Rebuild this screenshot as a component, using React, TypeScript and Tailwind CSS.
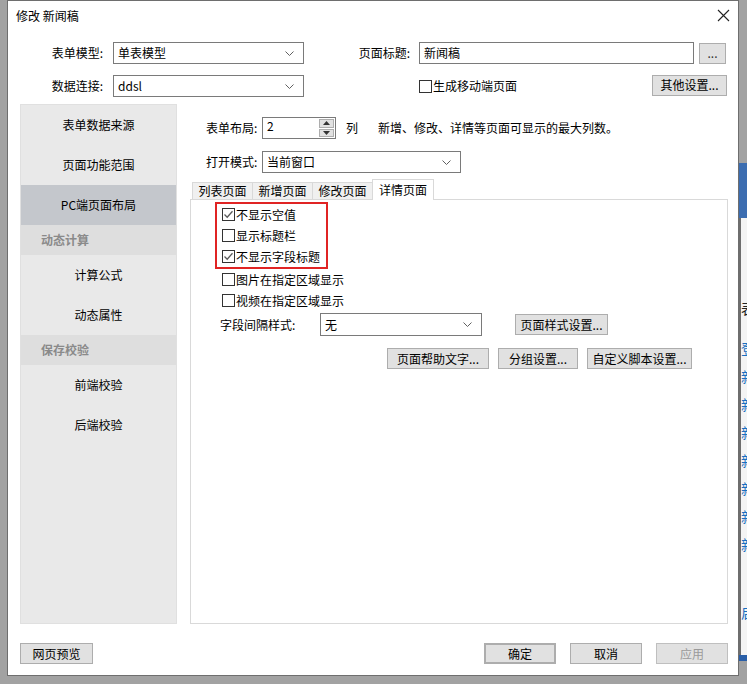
import React from 'react';

const Chevron = () => (
  <svg width="9" height="5" viewBox="0 0 9 5" className="shrink-0">
    <path d="M0.5 0.5 L4.5 4.5 L8.5 0.5" fill="none" stroke="#606060" strokeWidth="1" />
  </svg>
);

const Select: React.FC<{ value: string; className?: string }> = ({ value, className = '' }) => (
  <div className={`h-[22px] border border-[#7a7a7a] bg-white flex items-center pl-[4px] pr-[9px] ${className}`}>
    <span className="flex-1 leading-[20px]">{value}</span>
    <Chevron />
  </div>
);

const Btn: React.FC<{ children: React.ReactNode; className?: string }> = ({ children, className = '' }) => (
  <div className={`h-[21px] border border-[#adadad] bg-[#e1e1e1] flex items-center justify-center leading-none ${className}`}>
    {children}
  </div>
);

const Box: React.FC<{ checked?: boolean }> = ({ checked }) => (
  <span className="w-[13px] h-[13px] border border-[#333333] bg-white flex items-center justify-center shrink-0">
    {checked && (
      <svg width="11" height="11" viewBox="0 0 11 11">
        <path d="M1.5 5.5 L4.2 8.2 L9.5 2.2" fill="none" stroke="#5a5a5a" strokeWidth="1.3" />
      </svg>
    )}
  </span>
);

const Check: React.FC<{ checked?: boolean; label: string; className?: string }> = ({ checked, label, className = '' }) => (
  <div className={`h-[21px] flex items-center gap-[1px] ${className}`}>
    <Box checked={checked} />
    <span>{label}</span>
  </div>
);

const SideItem: React.FC<{ label: string; active?: boolean }> = ({ label, active }) => (
  <div className={`h-[40px] flex items-center justify-center ${active ? 'bg-[#c4c7cc]' : ''}`}>{label}</div>
);

const SideHeader: React.FC<{ label: string }> = ({ label }) => (
  <div className="h-[30px] flex items-center pl-[20px] bg-[#dedede] font-bold text-[#8a8a8a]">{label}</div>
);

const Spin = () => (
  <div className="w-[74px] h-[22px] border border-[#7a7a7a] bg-white flex">
    <span className="flex-1 pl-[4px] leading-[16px]">2</span>
    <div className="w-[16px] flex flex-col gap-[1px] py-[1px] pr-[1px]">
      <div className="flex-1 bg-[#e1e1e1] border border-[#adadad] flex items-center justify-center">
        <svg width="7" height="4" viewBox="0 0 7 4"><path d="M0 4 L3.5 0 L7 4 Z" fill="#333" /></svg>
      </div>
      <div className="flex-1 bg-[#e1e1e1] border border-[#adadad] flex items-center justify-center">
        <svg width="7" height="4" viewBox="0 0 7 4"><path d="M0 0 L3.5 4 L7 0 Z" fill="#333" /></svg>
      </div>
    </div>
  </div>
);

const Tab: React.FC<{ label: string; active?: boolean }> = ({ label, active }) =>
  active ? (
    <div className="w-[62px] h-[21px] bg-white border border-b-0 border-[#d9d9d9] flex items-center justify-center relative z-10">
      {label}
    </div>
  ) : (
    <div className="w-[60px] h-[18px] bg-[#f0f0f0] border border-r-0 border-[#d9d9d9] flex items-center justify-center">
      {label}
    </div>
  );

// a few link rows of the window behind the dialog
const bgLinks = ['新', '新', '新', '新', '新', '新'];

export default function App() {
  return (
    <div className="w-[747px] h-[684px] bg-[#a2a2a2] flex overflow-hidden text-[12px] text-black font-['Noto_Sans_CJK_SC','Microsoft_YaHei',sans-serif]">
      <div className="w-[7px] shrink-0" />
      <div className="w-[732px] h-[676px] shrink-0 bg-white border border-[#6e6e6e] flex flex-col">
        {/* title bar */}
        <div className="h-[29px] flex items-center pl-[8px] pr-[8px]">
          <span className="flex-1">修改 新闻稿</span>
          <svg width="13" height="13" viewBox="0 0 13 13">
            <path d="M1 1 L12 12 M12 1 L1 12" stroke="#222" strokeWidth="1.1" />
          </svg>
        </div>

        {/* header fields */}
        <div className="pt-[12px] pr-[11px] flex flex-col gap-[11px]">
          <div className="h-[22px] flex items-center">
            <span className="w-[95px] text-right">表单模型:</span>
            <Select value="单表模型" className="ml-[10px] w-[191px]" />
            <span className="w-[106px] text-right">页面标题:</span>
            <div className="ml-[9px] w-[275px] h-[22px] border border-[#7a7a7a] bg-white pl-[4px] leading-[20px]">新闻稿</div>
            <Btn className="ml-[5px] w-[27px] h-[21px] text-[#333]">...</Btn>
          </div>
          <div className="h-[22px] flex items-center">
            <span className="w-[95px] text-right">数据连接:</span>
            <Select value="ddsl" className="ml-[10px] w-[191px]" />
            <div className="ml-[115px] flex items-center gap-[1px]">
              <Box />
              <span>生成移动端页面</span>
            </div>
            <Btn className="ml-auto w-[75px] -mt-[2px]">其他设置...</Btn>
          </div>
        </div>

        {/* main area */}
        <div className="mt-[7px] h-[520px] flex pl-[12px] pr-[10px]">
          <div className="w-[157px] bg-[#e9e9e9] border border-[#e0e0e0] flex flex-col">
            <SideItem label="表单数据来源" />
            <SideItem label="页面功能范围" />
            <SideItem label="PC端页面布局" active />
            <SideHeader label="动态计算" />
            <SideItem label="计算公式" />
            <SideItem label="动态属性" />
            <SideHeader label="保存校验" />
            <SideItem label="前端校验" />
            <SideItem label="后端校验" />
          </div>

          <div className="ml-[13px] flex-1 flex flex-col">
            <div className="mt-[13px] h-[22px] flex items-center pl-[16px]">
              <span className="w-[56px]">表单布局:</span>
              <Spin />
              <span className="ml-[10px]">列</span>
              <span className="ml-[20px]">新增、修改、详情等页面可显示的最大列数。</span>
            </div>
            <div className="mt-[12px] h-[22px] flex items-center pl-[16px]">
              <span className="w-[56px]">打开模式:</span>
              <Select value="当前窗口" className="w-[199px]" />
            </div>

            <div className="mt-[6px] h-[21px] flex items-end pl-[2px]">
              <Tab label="列表页面" />
              <Tab label="新增页面" />
              <Tab label="修改页面" />
              <Tab label="详情页面" active />
            </div>

            <div className="-mt-[1px] flex-1 border border-[#d9d9d9] bg-white flex flex-col">
              <div className="mt-[2px] ml-[24px] w-[113px] border-2 border-[#e02424] pl-[5px] flex flex-col">
                <Check checked label="不显示空值" />
                <Check label="显示标题栏" />
                <Check checked label="不显示字段标题" />
              </div>
              <Check label="图片在指定区域显示" className="ml-[31px]" />
              <Check label="视频在指定区域显示" className="ml-[31px]" />

              <div className="mt-[2px] ml-[29px] h-[23px] flex items-center">
                <span className="w-[100px]">字段间隔样式:</span>
                <Select value="无" className="w-[162px] h-[23px]" />
                <Btn className="ml-[33px] w-[93px] h-[20px]">页面样式设置...</Btn>
              </div>

              <div className="mt-[12px] ml-[196px] flex gap-[9px]">
                <Btn className="w-[102px]">页面帮助文字...</Btn>
                <Btn className="w-[80px]">分组设置...</Btn>
                <Btn className="w-[105px]">自定义脚本设置...</Btn>
              </div>
            </div>
          </div>
        </div>

        {/* footer */}
        <div className="mt-[19px] flex items-center pl-[12px] pr-[10px]">
          <Btn className="w-[73px]">网页预览</Btn>
          <Btn className="ml-auto w-[72px] border-2 border-[#0078d7]">确定</Btn>
          <Btn className="ml-[14px] w-[72px]">取消</Btn>
          <Btn className="ml-[14px] w-[72px] bg-[#cccccc] border-[#bfbfbf] text-[#9a9a9a]">应用</Btn>
        </div>
      </div>

      {/* background window peeking at the right */}
      <div className="w-[8px] shrink-0 flex flex-col overflow-hidden">
        <div className="h-[163px] bg-[#a2a2a2]" />
        <div className="h-[55px] bg-[#3c6db0]" />
        <div className="h-[437px] bg-[#f4f4f4] border-l-2 border-[#6e6e6e] flex flex-col overflow-hidden text-[14px] leading-none">
          <div className="mt-[83px] whitespace-nowrap text-[#222]">表</div>
          <div className="mt-[26px] whitespace-nowrap text-[#1a6fc0]">登</div>
          {bgLinks.map((c, i) => (
            <div key={i} className="mt-[14px] whitespace-nowrap text-[#1a6fc0]">{c}</div>
          ))}
          <div className="mt-[14px] whitespace-nowrap text-[#1a6fc0]">新</div>
          <div className="mt-[54px] whitespace-nowrap text-[#1a6fc0]">启</div>
        </div>
        <div className="h-[6px] bg-[#2a5fa8]" />
        <div className="flex-1 bg-[#a2a2a2]" />
      </div>
    </div>
  );
}
